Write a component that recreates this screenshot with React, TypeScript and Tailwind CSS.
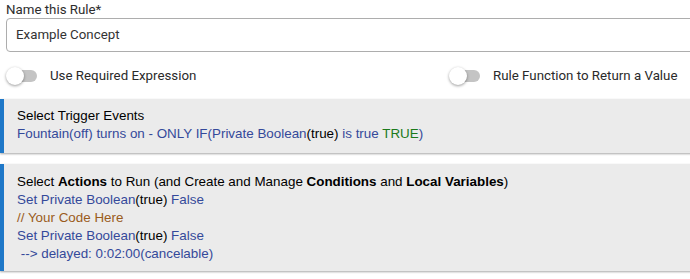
import React from 'react';

const Toggle: React.FC<{ label: string }> = ({ label }) => (
  <div className="flex items-center">
    <div className="relative w-[32px] h-[20px] flex items-center">
      <div className="ml-[6px] w-[25px] h-[12px] rounded-full bg-[#c4c4c4]" />
      <div className="absolute left-0 top-[1px] w-[18px] h-[18px] rounded-full bg-white shadow-[0_1px_3px_rgba(0,0,0,0.4)]" />
    </div>
    <span className="ml-[12px] text-[13.3px] text-[#2a2a2a]">{label}</span>
  </div>
);

const Blue: React.FC<{ children: React.ReactNode }> = ({ children }) => (
  <span className="text-[#34499a]">{children}</span>
);

const App: React.FC = () => {
  return (
    <div className="w-[690px] h-[279px] bg-white overflow-hidden font-['Roboto',sans-serif]">
      <div className="pl-[6px]">
        <div className="pt-[1px] text-[13.3px] leading-[17px] text-[#2d2d2d]">Name this Rule*</div>
        <div className="h-[34px] w-[700px] border border-[#adadad] rounded-[4px] flex items-center pl-[9px] text-[13.3px] text-[#333]">
          Example Concept
        </div>
        <div className="flex mt-[14px] h-[20px]">
          <div className="w-[443px]">
            <Toggle label="Use Required Expression" />
          </div>
          <Toggle label="Rule Function to Return a Value" />
        </div>
      </div>

      <div className="mt-[13px] w-[700px] h-[54px] bg-[#ebebeb] border-l-[4px] border-[#1f78c8] shadow-[0_1px_2px_rgba(0,0,0,0.35)] pl-[13px] pt-[8px] font-['Liberation_Sans',Arial,sans-serif] text-[13.4px] leading-[18px] text-black">
        <div>Select Trigger Events</div>
        <div>
          <Blue>Fountain(off) turns on - ONLY IF(Private Boolean</Blue>(true)<Blue> is true </Blue>
          <span className="text-[#1b7a1b]">TRUE</span>
          <Blue>)</Blue>
        </div>
      </div>

      <div className="mt-[11px] w-[700px] h-[107px] bg-[#ebebeb] border-l-[4px] border-[#1f78c8] shadow-[0_1px_2px_rgba(0,0,0,0.35)] pl-[13px] pt-[9px] font-['Liberation_Sans',Arial,sans-serif] text-[13.4px] leading-[18px] text-black">
        <div>
          Select <b>Actions</b> to Run (and Create and Manage <b>Conditions</b> and <b>Local Variables</b>)
        </div>
        <div>
          <Blue>Set Private Boolean</Blue>(true)<Blue> False</Blue>
        </div>
        <div className="text-[#9a5b1c]">// Your Code Here</div>
        <div>
          <Blue>Set Private Boolean</Blue>(true)<Blue> False</Blue>
        </div>
        <div>
          <Blue>&nbsp;--&gt; delayed: 0:02:00(cancelable)</Blue>
        </div>
      </div>
    </div>
  );
};

export default App;
